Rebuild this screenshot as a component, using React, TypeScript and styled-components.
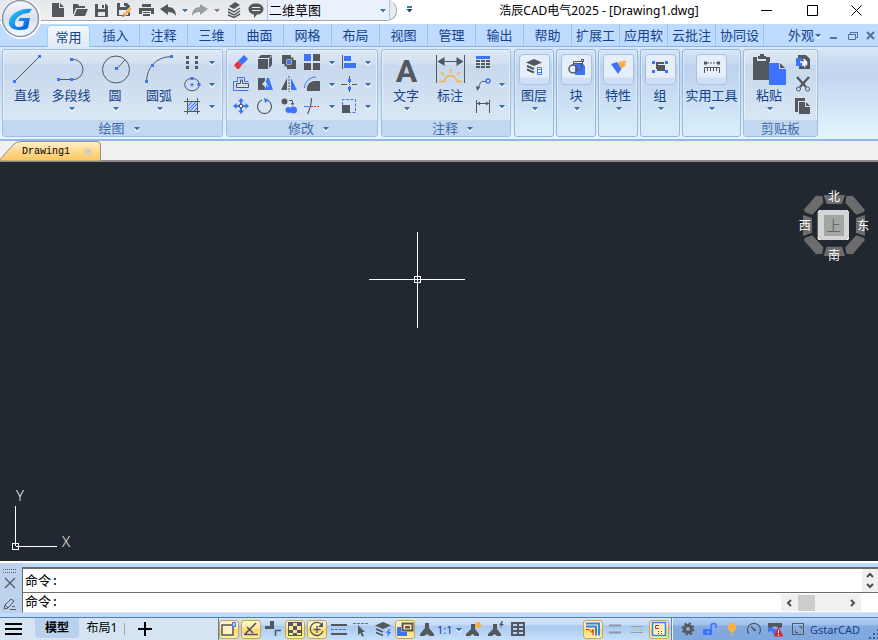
import React from 'react';
import styled, { createGlobalStyle, css } from 'styled-components';

const K = '#53585f';
const B = '#3d73ff';
const O = '#fbb040';
const NAVY = '#15428b';

const GlobalStyle = createGlobalStyle`
  *, *::before, *::after { box-sizing: border-box; }
  body {
    margin: 0;
    font-family: "Noto Sans", "Noto Sans CJK SC", sans-serif;
    font-size: 13px;
    color: #000;
    background: #bfdbff;
  }
  button, select, input, textarea { font: inherit; color: inherit; }
  button { margin: 0; padding: 0; border: 0; background: none; }
  svg { display: block; flex: none; overflow: visible; }
`;

const Page = styled.div`
  position: relative;
  display: flex;
  flex-direction: column;
  min-height: 100vh;
  overflow: hidden;
`;

/* ---------- title bar ---------- */

const TitleBar = styled.header`
  display: flex;
  align-items: flex-start;
  height: 24px;
  background: #fff;
`;

const QuickAccess = styled.div`
  display: flex;
  align-items: center;
  height: 21px;
  padding: 0 6px 0 47px;
  background: linear-gradient(#e4e7ec, #eeeff2);
  border: solid #a4a6ab;
  border-width: 0 1px 1px 0;
  border-radius: 0 10px 10px 0;
`;

const ToolButton = styled.button<{ $w?: number }>`
  display: flex;
  flex: none;
  align-items: center;
  justify-content: center;
  width: ${p => p.$w ?? 22}px;
  height: 20px;
`;

const WorkspaceBox = styled.label`
  display: grid;
  align-items: center;
  width: 123px;
  height: 20px;
  background: #e9f1fc;
  border: solid #a9c5e8;
  border-width: 0 1px;

  > * { grid-area: 1 / 1; }
  > svg { justify-self: end; margin-right: 3px; pointer-events: none; }
`;

const WorkspaceSelect = styled.select`
  width: 100%;
  height: 20px;
  padding: 0 1px;
  border: 0;
  background: none;
  appearance: none;
  line-height: 20px;
`;

const WindowTitle = styled.h1`
  flex: 1;
  margin: 0;
  padding-left: 32px;
  font-size: 12px;
  font-weight: 400;
  line-height: 22px;
  text-align: center;
  white-space: nowrap;
`;

const AppButton = styled.button`
  position: absolute;
  z-index: 2;
  top: 0;
  left: 1px;
  width: 42px;
  height: 40px;
`;

/* ---------- ribbon tabs ---------- */

const TabRow = styled.nav`
  display: flex;
  height: 23px;
  padding-left: 44px;
  background: #bfdbff;
  border-bottom: 1px solid #8db2e3;
  color: ${NAVY};
`;

const RibbonTab = styled.button<{ $active?: boolean }>`
  flex: none;
  width: 48px;
  height: 22px;
  overflow: hidden;
  border-right: 1px solid #a3c3ec;
  line-height: 22px;
  white-space: nowrap;
  ${p => p.$active && css`
    width: 43px;
    height: 22px;
    margin: 1px 2px -1px 3px;
    line-height: 20px;
    background: linear-gradient(#f4f8fd, #dfe9f5);
    border: 1px solid #8fdcf2;
    border-bottom: 0;
    border-radius: 4px 4px 0 0;
  `}
`;

const TabRowEnd = styled.div`
  display: flex;
  flex: 1;
  align-items: center;
  justify-content: flex-end;
`;

const LookButton = styled.button`
  display: flex;
  align-items: center;
  margin-right: 3px;
  line-height: 20px;
`;

/* ---------- ribbon ---------- */

const Ribbon = styled.section`
  display: flex;
  gap: 2px;
  padding: 2px 1px 2px 2px;
  background: linear-gradient(#dbe8f7 0, #c6daf2 16px, #c2d6f0 30px, #e3f6ff 92px);
  border-bottom: 2px solid #93b8e6;
  color: ${NAVY};
`;

const Panel = styled.section<{ $w: number }>`
  display: flex;
  flex: none;
  flex-direction: column;
  width: ${p => p.$w}px;
  height: 88px;
  overflow: hidden;
  background: linear-gradient(#dfe8f4 0, #d3e0f1 14px, #c7d8ed 15px, #d9e6f4 70px);
  border: 1px solid #9ebedd;
  border-radius: 3px;
  box-shadow: inset 0 0 0 1px #e6f0fa;

  & + & { margin-left: 1px; }
`;

const PanelBody = styled.div`
  display: flex;
  flex: 1;
  padding: 2px 2px 0;
`;

const PanelTitle = styled.button<{ $menu?: boolean }>`
  display: flex;
  align-items: center;
  justify-content: center;
  gap: 8px;
  height: 16px;
  padding-left: ${p => (p.$menu ? 13 : 0)}px;
  background: #c1d8f0;
  color: #3f6cab;
  line-height: 16px;
`;

const SoloPanel = styled.button<{ $w: number }>`
  display: flex;
  flex: none;
  flex-direction: column;
  align-items: center;
  width: ${p => p.$w}px;
  height: 88px;
  padding-top: 4px;
  background: linear-gradient(#d8e5f5 0, #c5d8ef 14px, #bdd1ec 15px, #d8effa 86px);
  border: 1px solid #93b6da;
  border-radius: 3px;
  box-shadow: inset 0 0 0 1px #dcebf9;

  ${Panel} + & { margin-left: 1px; }
`;

const IconFrame = styled.span`
  display: flex;
  align-items: center;
  justify-content: center;
  width: 31px;
  height: 31px;
  padding-bottom: 6px;
  background: linear-gradient(#e6eefa 0 22px, #cfe0f4 23px);
  border: 1px solid #a8c3e2;
  border-radius: 4px;
`;

const BigButton = styled.button<{ $w?: number }>`
  display: flex;
  flex: none;
  flex-direction: column;
  align-items: center;
  width: ${p => p.$w ?? 44}px;
  padding-top: 1px;
`;

const Label = styled.span`
  height: 20px;
  margin-bottom: 1px;
  line-height: 20px;
  white-space: nowrap;
`;

const SmallGrid = styled.div<{ $cols: string }>`
  display: grid;
  flex: none;
  grid-template-columns: ${p => p.$cols};
  grid-auto-rows: 22px;
  height: 66px;
`;

const SmallButton = styled.button`
  display: flex;
  align-items: center;
  justify-content: center;
  padding-bottom: 2px;
`;

/* ---------- document tabs and drawing area ---------- */

const DocBar = styled.nav`
  display: flex;
  align-items: flex-end;
  height: 21px;
  background: #f0f0f0;
  border-bottom: 2px solid #8c8c8c;
`;

const DocTab = styled.div`
  display: grid;
  width: 101px;
  height: 20px;
  margin-bottom: -1px;

  > * { grid-area: 1 / 1; }
`;

const DocTabContent = styled.div`
  display: flex;
  align-items: center;
  justify-content: space-between;
  padding: 1px 8px 0 22px;
  font: 10px/18px "Liberation Mono", monospace;
`;

const Canvas = styled.main`
  position: relative;
  flex: 1;
  min-height: 200px;
  background: #212830;
`;

const Crosshair = styled.svg`
  position: absolute;
  top: 70px;
  left: 369px;
`;

const ViewCube = styled.svg`
  position: absolute;
  top: 18px;
  right: 8px;
  font-family: "Noto Sans CJK SC", sans-serif;
`;

const AxisIcon = styled.svg`
  position: absolute;
  bottom: 8px;
  left: 11px;
  font-family: "Open Sans", sans-serif;
  font-weight: 300;
`;

/* ---------- command window ---------- */

const CommandArea = styled.section`
  display: flex;
  height: 56px;
  background: #fff;
  border-top: 2px solid #fff;
  border-bottom: 4px solid #bfdbff;
`;

const Gutter = styled.div`
  display: flex;
  flex: none;
  flex-direction: column;
  align-items: center;
  justify-content: space-between;
  width: 22px;
  padding: 6px 3px 0 0;
  background: #bcd1eb;
`;

const CommandBody = styled.div`
  flex: 1;
  min-width: 0;
  border-top: 4px solid #bfdbff;
  font-family: "Liberation Mono", "Noto Sans CJK SC", monospace;
  font-size: 13px;
`;

const History = styled.div`
  display: flex;
  height: 26px;
  border: solid #6d6d6d;
  border-width: 2px 0 1px 1px;
`;

const HistoryText = styled.div`
  display: flex;
  flex: 1;
  flex-direction: column;
  justify-content: flex-end;
  overflow: hidden;
  padding-left: 2px;
  line-height: 20px;
`;

const Prompt = styled.div`
  display: flex;
  height: 20px;
  padding: 0 17px 0 2px;
  border-left: 1px solid #6d6d6d;
  border-bottom: 1px solid #e3e3e3;
`;

const PromptInput = styled.input`
  flex: 1;
  min-width: 0;
  padding: 0;
  border: 0;
  outline: 0;
  line-height: 18px;
`;

const VScroll = styled.div`
  display: flex;
  flex-direction: column;
  align-items: center;
  justify-content: space-around;
  width: 16px;
  background: #f0f0f0;
`;

const HScroll = styled.div`
  display: flex;
  align-items: center;
  width: 80px;
  height: 17px;
  margin-top: 1px;
  padding: 0 4px;
  background: #f0f0f0;
`;

const Thumb = styled.span`
  width: 17px;
  height: 16px;
  margin: 0 auto 0 5px;
  background: #cdcdcd;
`;

/* ---------- status bar ---------- */

const StatusBar = styled.footer`
  display: flex;
  height: 23px;
  border-top: 1px solid #567db1;
`;

const Layouts = styled.div`
  display: flex;
  flex: none;
  align-items: center;
  width: 219px;
  background: #d5e3f2;
  border-right: 1px solid #68809f;
  font-size: 12px;
`;

const MenuButton = styled.button`
  display: flex;
  justify-content: center;
  width: 27px;
  margin-right: 8px;
`;

const LayoutTab = styled.button<{ $active?: boolean }>`
  width: 44px;
  height: 20px;
  align-self: flex-start;
  line-height: 18px;
  border-radius: 0 0 4px 4px;
  ${p => p.$active && css`
    background: #b9d1ed;
    font-weight: 700;

    & + & { margin-left: 1px; }
  `}
`;

const Rule = styled.span`
  width: 1px;
  height: 12px;
  margin: 0 13px 0 0;
  background: #9aa7b6;
`;

const StatusTools = styled.div`
  display: flex;
  flex: 1;
  align-items: center;
  background: linear-gradient(#d6e6fa 0, #c4daf6 7px, #a9c9f0 8px, #c6e0fb 22px);
`;

const StatusToggle = styled.button<{ $on?: boolean }>`
  display: flex;
  flex: none;
  align-items: center;
  justify-content: center;
  width: 20px;
  height: 19px;
  margin-right: 2px;
  ${p => p.$on && css`
    background: linear-gradient(#fff6d8, #ffe79c 45%, #ffd85e 50%, #fff0b0);
    border: 1px solid #c5a559;
    border-radius: 3px;
  `}
`;

const ScaleButton = styled.button`
  display: flex;
  align-items: center;
  gap: 2px;
  margin: 0 2px 0 -2px;
  color: ${NAVY};
  font-size: 11px;
`;

const Spacer = styled.span`
  flex: 1;
`;

const StatusInfo = styled.div`
  display: flex;
  align-items: center;
  padding-left: 6px;
  background: linear-gradient(#b4d0f3 0, #9dbfec 7px, #86abe0 8px, #7fa8de 22px);
  border-left: 1px solid #5f84b8;
  box-shadow: inset 1px 0 0 #e3effc;
  color: ${NAVY};
  font-size: 11px;
`;

const Grip = styled.span`
  align-self: flex-end;
  margin-left: 8px;
`;

/* ---------- drawings ---------- */

const Caret = ({ c = '#3f70ae' }: { c?: string }) => (
  <svg width="7" height="5" viewBox="0 0 7 5" aria-hidden="true">
    <path d="M1 3h6L4 6z" fill="#fff" />
    <path d="M1 1h6L4 4.500z" fill={c} />
  </svg>
);

const dot = (x: number, y: number, s = 3) => (
  <rect key={`${x}-${y}`} x={x - s / 2} y={y - s / 2} width={s} height={s} fill={B} />
);

const big: Record<string, React.ReactNode> = {
  line: <><path d="M4.5 28.5l25-25" stroke={K} />{dot(4.5, 28.5)}{dot(29.5, 3.5)}</>,
  polyline: <><path d="M4.5 26.5h13a10 10 0 0 0 11.500-10a10 10 0 0 0-11.500-10" stroke={K} fill="none" />{dot(4.5, 26.5)}{dot(17.5, 26.5)}{dot(17.5, 6.5)}</>,
  circle: <><circle cx="18" cy="16.500" r="13.500" stroke={K} fill="none" /><path d="M18.500 16l8.500-9" stroke={K} />{dot(18.5, 15.5)}</>,
  arc: <><path d="M4.500 28.500C5 14 14 4 29.500 3.500" stroke={K} fill="none" />{dot(4.5, 28.5)}{dot(10.5, 12.5)}{dot(29.5, 3.5)}</>,
  text: <text x="17.500" y="29" textAnchor="middle" fontFamily="Roboto, sans-serif" fontWeight="700" fontSize="32" fill={K}>A</text>,
  dim: (
    <>
      <path d="M3.500 2v28M31.500 2v28M5 8.500h25" stroke={K} />
      <path d="M4.500 8.500l7-4.500v9zM30.500 8.500l-7-4.500v9z" fill={K} />
      <path d="M6 28.500h5.500M23.500 28.500H29M11.500 28.500a6 6 0 0 1 12 0M17.500 20v-4M11 22l-3-3M24 22l3-3" stroke={O} strokeWidth="1.500" fill="none" />
    </>
  ),
  paste: (
    <>
      <path d="M1 4h4v4h9V4h4v5h-1v18H1z" fill={K} />
      <path d="M6 3h2V1h4v2h2v3H6z" fill={K} />
      <path d="M17 10h10v6h7v16H17z" fill={B} /><path d="M28 10l5 5h-5z" fill={K} />
    </>
  ),
};

const BigIcon = ({ n }: { n: string }) => (
  <svg width="34" height="32" viewBox="0 0 34 32" aria-hidden="true">{big[n]}</svg>
);

const icons: Record<string, React.ReactNode> = {
  file: <><path d="M2 1h7v5h5v9H2z" fill={K} /><path d="M10 1l4 4h-4z" fill={K} /></>,
  open: <><path d="M1 13V2h5l1 2h6v2H4z" fill={K} /><path d="M5 7h11l-3 7H2z" fill={K} /></>,
  save: <><path d="M1 2h11l2 2v11H1z" fill={K} /><path d="M4 2h7v5H4zM4 10h7v4H4z" fill="#e8ebef" /><path d="M8 3h2v3H8z" fill={K} /></>,
  saveas: (
    <>
      <path d="M1 1h10l3 3v10H1z" fill={K} /><path d="M4 1h6v4H4zM3 8h9v5H3z" fill="#e8ebef" /><path d="M8 1h2v3H8z" fill={K} />
      <path d="M6 15l1-3 7-7 2 2-7 7z" fill={O} stroke="#e8ebef" strokeWidth=".6" /><path d="M6 15l1-3 2 2z" fill="#e8423f" />
    </>
  ),
  print: <><path d="M4 2h9v3H4zM1 6h15v6h-3V9H4v3H1z" fill={K} /><path d="M5 10h7v4H5z" fill={K} /><path d="M5 11.500h7" stroke="#e8ebef" /></>,
  undo: <path d="M0 7l8-5v3c5 0 8 3 8 9-2-3-4-4-8-4v3z" fill={K} />,
  redo: <path d="M16 7L8 2v3C3 5 0 8 0 14c2-3 4-4 8-4v3z" fill="#9a9ea4" />,
  layers: <><path d="M9 0l5 3-6 4-5-2.500z" fill={K} /><path d="M2 7l6 3 6-4M2 10l6 3 6-4M2 13l6 2.500 6-3.500" stroke={K} strokeWidth="1.500" fill="none" /></>,
  chat: <><path d="M8 1.500c4 0 7.500 2 7.500 5.500S12 12.500 9 12.500L6 16v-3.500C3 12 .5 10 .5 7 .5 3.500 4 1.500 8 1.500z" fill={K} /><path d="M4 5.500h8M4 8.500h8" stroke="#e8ebef" /></>,

  points: <path d="M2 2h3v3H2zM11 2h3v3h-3zM2 7h3v3H2zM11 7h3v3h-3zM2 12h3v3H2zM11 12h3v3h-3z" fill={K} />,
  ellipse: <><ellipse cx="8" cy="8.500" rx="7.300" ry="6.300" stroke={K} fill="none" /><path d="M8 7v4M6 8.500h4" stroke={B} />{dot(8, 2.500)}{dot(15, 8.500)}</>,
  hatch: <><path d="M4 4h9v9H4z" fill="#b7cbff" /><path d="M4 8l4-4M4 12l8-8M6 13l7-7M10 13l3-3" stroke={B} /><path d="M3.500 0v16M13.500 0v16M0 3.500h16M0 13.500h16" stroke={K} /></>,

  erase: <><path d="M5 7l6-6 4 4-6 6z" fill={B} /><path d="M1 11l4-4 4 4-3 4H4z" fill="#e03a3e" /></>,
  box: <><path d="M1 5h10v10H1zM1 4l3-3h11l-3 3zM12 5l3-3v9l-3 3z" fill={K} /></>,
  overlap: <><path d="M1 1h9v3H4v6H1zM15 15H6v-3h6V6h3z" fill={K} /><path d="M4.500 4.500h7v7h-7z" fill="#fff" stroke={K} strokeWidth="2" /><path d="M6 6h4v4H6z" fill={B} /></>,
  array: <><path d="M0 0h7v7H0z" fill={B} /><path d="M9 0h7v7H9zM0 9h7v7H0zM9 9h7v7H9z" fill={K} /></>,
  align: <><path d="M1.500 1v14" stroke={K} /><path d="M3 2h7v5H3zM3 9h12v5H3z" fill={B} /></>,
  offset: <><path d="M4.500 5.500v-4h7v4h4M4.500 5.500h-4v9h15" stroke={B} fill="none" /><path d="M7.500 4v3.500h-4V11.500h12V7.500h-6V4z" stroke={K} fill="none" /></>,
  stretch: <><path d="M1 2h7v3l-3 3 3 3v3H1z" fill={K} /><path d="M10 2h2l4 12H7l2-3V5z" fill={B} /><path d="M8 5l3 6" stroke="#dbe6f4" /></>,
  mirror: <><path d="M6 2v12H0z" fill={K} /><path d="M10 2v12h6z" fill={B} /><path d="M8 0v16" stroke={K} strokeDasharray="2 1" /></>,
  fillet: <><path d="M3 15v-3c1-5 4-7 8-7h5v10z" fill={K} /><path d="M.5 12C1 5 6 1 12 1" stroke={B} fill="none" /></>,
  breakpt: <><path d="M8.500 0v16M0 8.500h6M11 8.500h5" stroke={K} />{dot(8.5, 4.5)}{dot(8.5, 12.5)}<path d="M7 7h3v3H7z" fill="#d2e0f2" /><path d="M8 8h1v1H8z" fill={K} /></>,
  move: <><path d="M8 2v12M2 8h12" stroke={B} strokeWidth="2" /><path d="M8 0l3 3.500H5zM8 16l3-3.500H5zM0 8l3.500-3v6zM16 8l-3.500-3v6z" fill={B} /><path d="M6.500 6.500h3v3h-3z" fill="#fff" stroke={K} /></>,
  rotate: <><path d="M10 2a7 7 0 1 1-5 0" stroke={K} strokeWidth="1.200" fill="none" /><path d="M7 0l5 2-4 3z" fill={B} /></>,
  copy: <><circle cx="3.500" cy="3.500" r="3" fill={K} /><circle cx="7.500" cy="12" r="3" fill={B} /><circle cx="12.500" cy="12" r="3.500" fill={B} /><path d="M8 2.500h3.500V6" stroke={K} fill="none" /><path d="M9.500 5h4l-2 2.500z" fill={K} /></>,
  trim: <><path d="M0 8.500h5" stroke={B} /><path d="M7 8.500h9" stroke="#e03a3e" strokeDasharray="2 1" /><path d="M7.500 0c0 5-1 10-4 16" stroke={K} strokeWidth="1.200" fill="none" /></>,
  scale: <><path d="M1.500 7V1.500h13v13H9" stroke={B} strokeDasharray="3 1.500" fill="none" /><path d="M1 7h8v8H1z" fill={K} /></>,

  table: <><path d="M1 2h14v3H1z" fill={B} /><path d="M1 6h4v2H1zM6 6h4v2H6zM11 6h4v2h-4zM1 9h4v2H1zM6 9h4v2H6zM11 9h4v2h-4zM1 12h4v2H1zM6 12h4v2H6zM11 12h4v2h-4z" fill={K} /></>,
  leader: <><path d="M3.500 13c1-5 2-7.500 4-7.500h3" stroke={K} fill="none" /><path d="M1 10l4 1-3 4z" fill={K} /><circle cx="13" cy="5" r="2" fill="#d5e2f4" stroke={B} strokeWidth="1.500" /></>,
  linear: <><path d="M1.500 2v13M14.500 2v13M2 5.500h12" stroke={K} /><path d="M2 5.500l3-2v4zM14 5.500l-3-2v4z" fill={K} /></>,

  layerlist: <><path d="M8 0l8 3.500L8 7 0 3.500z" fill={K} /><path d="M1 7l7 3M1 10.500l7 3" stroke={K} strokeWidth="2" fill="none" /><path d="M11.500 8.500h4v7h-4z" fill="#fff" stroke={B} /><path d="M12 10.500h3M12 13.500h3" stroke={B} /></>,
  block: <><path d="M7 4h7l3 3v9H7z" fill={B} /><path d="M5.500 6V2.500H14M14.500 2v6" stroke={K} fill="none" /><rect x="13.500" y=".5" width="2" height="2" fill="#fff" stroke={K} /><path d="M5 4.500h8.500V11H9" fill="none" stroke={K} /><circle cx="5" cy="10" r="4" fill="none" stroke={K} strokeWidth="1.500" /></>,
  brush: <><path d="M1 5l6-2 5 6-4 6z" fill={B} /><path d="M8 4l2-2 2 1 2-2 2 2-1 2 1 1-5 4z" fill={O} /></>,
  group: <><path d="M4 3h8v2H6v5H4z" fill={K} /><path d="M0 2h3v3H0zM13 2h3v3h-3zM0 11h3v3H0zM13 11h3v3h-3z" fill={B} /><path d="M5 6h8v6H5z" fill={K} /></>,
  ruler: <><path d="M0 4h3M13 4h3" stroke={K} strokeWidth="3" /><path d="M3 4h10" stroke={K} strokeDasharray="2 1" /><path d="M.5 14V8.500h15V14M3.500 8v4M6.500 8v4M9.500 8v4M12.500 8v4" stroke={K} fill="none" /></>,

  pastespec: <><path d="M3 1h8l4 4v10H4v-3h5v2l4-4-4-4v2H3z" fill={K} /><path d="M1 4h6v8H1z" fill={B} /><path d="M5 8h6M8.500 5l3 3-3 3" stroke="#fff" strokeWidth="1.500" fill="none" /></>,
  cut: <><path d="M2 1l9 10M14 1L5 11" stroke={K} strokeWidth="2.400" /><circle cx="3.500" cy="13" r="2" fill="none" stroke={K} /><circle cx="12.500" cy="13" r="2" fill="none" stroke={K} /></>,
  copyclip: <><path d="M0 0h10v3H3v11H0z" fill={K} /><path d="M4 4h6v5h5v7H4z" fill={K} /><path d="M11 4l4 4h-4z" fill={K} /></>,

  snap: <><path d="M1 4h11v10H1z" fill="#fff3c6" stroke={K} strokeWidth="1.500" /><path d="M11.500 1.500h3v4h-3z" fill="#bcd0ff" stroke={B} /></>,
  angle: <path d="M2 13L13 2M1 13.500h14M4 6l6 6" stroke={K} strokeWidth="1.700" fill="none" />,
  ortho: <><path d="M5 0h4v8H0V5h5z" fill={K} /><path d="M10.500 15V9.500H16" stroke={K} strokeWidth="1.500" fill="none" /></>,
  grid: <><path d="M1 1h14v14H1z" fill={K} /><path d="M2 5h4v4H2zM6 2h4v3H6zM10 5h4v4h-4zM6 9h4v3H6zM2 12h4v2H2zM10 12h4v2h-4z" fill="#ffe79c" /></>,
  polar: <><path d="M13 4a6.500 6.500 0 1 0 1 6M8 5v7M4.500 8.500h7" stroke={K} strokeWidth="1.300" fill="none" /><path d="M14 1v5H9z" fill={K} /></>,
  lwt: <><path d="M0 4h16" stroke={K} strokeWidth="2" /><path d="M0 8.500h16" stroke={B} strokeDasharray="3 1" /><path d="M0 13h16" stroke={K} strokeWidth="2" /></>,
  pick: <><path d="M0 2.500h16" stroke={B} strokeDasharray="3 1" /><path d="M5 4l7 7H9l2 4-2 .5L7.500 12 5 14z" fill={K} /></>,
  layerflash: <><path d="M8 1l8 3.500L8 8 0 4.500z" fill={K} /><path d="M1 8l7 3M1 11.500l7 3" stroke={K} strokeWidth="1.800" fill="none" /><path d="M14 8l-3 4h2l-1 4 4-5h-2l1-3z" fill={B} /></>,
  screens: <><path d="M5.500 2.500h10v7h-10z" fill="#ffe79c" stroke={K} strokeWidth="2" /><path d="M8 5h5v2.500H8z" fill={K} /><path d="M0 6h4v5h6v4H0z" fill={B} /></>,
  person: <path d="M6 2h4v5l5 6v2h-4l-3-2-3 2H1v-2l5-6z" fill={K} />,
  personsun: <><path d="M5 3h4v5l4 5v2h-4l-2.500-2L4 15H0v-2l5-5z" fill={K} /><circle cx="12" cy="4" r="3" fill={O} /></>,
  personbolt: <><path d="M5 3h4v5l4 5v2h-4l-2.500-2L4 15H0v-2l5-5z" fill={K} /><path d="M14 0l-3 4h2l-1 3 4-4h-2l1-3z" fill={K} /></>,
  cells: <><path d="M1 1h14v14H1z" fill={K} /><path d="M3 3h4v2H3zM9 3h4v2H9zM3 7h4v2H3zM9 7h4v2H9zM3 11h4v2H3zM9 11h4v2H9z" fill="#b9d4f5" /></>,

  cascade: <><path d="M1 2.500h13v12M1 5.500h10v9" stroke="#2f86f0" strokeWidth="2" fill="none" /><path d="M1 8.500h3l3 3 1-3v6" stroke="#e32020" fill="none" /></>,
  bars: <path d="M2 4.500h12M2 11.500h12" stroke="#8e98a6" strokeWidth="2" />,
  hatchbar: <><path d="M2 5.500h12M2 11.500h12" stroke="#93a0a8" /><path d="M3 10l4-4M7 10l4-4M11 10l3-3" stroke="#b9bd8a" /></>,
  schema: <><path d="M1.500 1.500h13v13h-13z" stroke="#2f86f0" strokeWidth="1.600" fill="#fff1bd" /><path d="M8 4.500H4.500v3H8" stroke="#e32020" fill="none" /><path d="M7 10.500h6M7 12.500h6" stroke="#e32020" fill="none" strokeDasharray="1 2" /></>,
  gear: <><circle cx="8" cy="8" r="3.500" fill="none" stroke={K} strokeWidth="3" /><circle cx="8" cy="8" r="5.500" fill="none" stroke={K} strokeWidth="2" strokeDasharray="2.300 2" /></>,
  unlock: <><path d="M1 8h9v6H1z" fill={B} /><path d="M9 8V5a2.500 2.500 0 0 1 5 0v2" stroke={B} strokeWidth="1.600" fill="none" /><path d="M5 10h1.500v2H5z" fill="#9fc0ee" /></>,
  bulb: <><path d="M8 2a4.300 4.300 0 0 1 2 8v1H6v-1a4.300 4.300 0 0 1 2-8z" fill={O} /><path d="M6 12.500h4M7 14.500h2" stroke={O} /></>,
  gauge: <><path d="M3 13a6.500 6.500 0 1 1 10 0M8.500 9L5 5.500" stroke={K} strokeWidth="1.300" fill="none" /><circle cx="8.500" cy="9" r="1.300" fill={K} /></>,
  alert: <><path d="M0 2h14v4c-4 3-6-3-9 0l-5 2z" fill={K} /><path d="M0 7c4-3 6 3 9 1v6H6L4 10l-4 1z" fill={B} /><path d="M10.500 6l5 9.500h-10z" fill="#e6252b" /><path d="M10.500 9v3M10.500 13v1.500" stroke="#fff" /></>,
  expand: <><path d="M2.500 2.500h11v11h-11z" fill="none" stroke={K} /><path d="M9 5.500h2.500V8M5.500 9v2.500H8" fill="none" stroke={K} /></>,
};

const Icon = ({ n, s = 16 }: { n: string; s?: number }) => (
  <svg width={s} height={s} viewBox="0 0 16 16" aria-hidden="true">{icons[n]}</svg>
);

const Chevron = ({ d }: { d: string }) => (
  <svg width="8" height="8" viewBox="0 0 8 8" aria-hidden="true">
    <path d={d} stroke="#505050" strokeWidth="2" fill="none" />
  </svg>
);

/* ---------- composed controls ---------- */

const Big = ({ n, label, w, menu = true }: { n: string; label: string; w?: number; menu?: boolean }) => (
  <BigButton $w={w}>
    <BigIcon n={n} />
    <Label>{label}</Label>
    {menu && <Caret />}
  </BigButton>
);

const Smalls = ({ cols, items }: { cols: string; items: [string, string][] }) => (
  <SmallGrid $cols={cols}>
    {items.map(([n, label], i) => (
      n === '' ? <span key={i} /> : (
        <SmallButton key={i} aria-label={label}>
          {n === 'caret' ? <Caret /> : <Icon n={n} />}
        </SmallButton>
      )
    ))}
  </SmallGrid>
);

const Solo = ({ n, label, w = 40 }: { n: string; label: string; w?: number }) => (
  <SoloPanel $w={w}>
    <IconFrame><Icon n={n} /></IconFrame>
    <Label>{label}</Label>
    <Caret />
  </SoloPanel>
);

const tabs = ['常用', '插入', '注释', '三维', '曲面', '网格', '布局', '视图', '管理', '输出', '帮助', '扩展工', '应用软', '云批注', '协同设'];

const quick: [string, string][] = [
  ['file', '新建'], ['open', '打开'], ['save', '保存'], ['saveas', '另存为'], ['print', '打印'], ['undo', '放弃'],
];

const drawTools: [string, string][] = [
  ['points', '多点'], ['caret', '点选项'],
  ['ellipse', '椭圆'], ['caret', '椭圆选项'],
  ['hatch', '填充'], ['caret', '填充选项'],
];

const modifyTools: [string, string][] = [
  ['erase', '删除'], ['box', '拉伸体'], ['overlap', '叠放'], ['array', '阵列'], ['caret', '阵列选项'], ['align', '对齐'], ['caret', '对齐选项'],
  ['offset', '偏移'], ['stretch', '拉伸'], ['mirror', '镜像'], ['fillet', '圆角'], ['caret', '圆角选项'], ['breakpt', '打断'], ['caret', '打断选项'],
  ['move', '移动'], ['rotate', '旋转'], ['copy', '复制'], ['trim', '修剪'], ['caret', '修剪选项'], ['scale', '缩放'], ['caret', '缩放选项'],
];

const noteTools: [string, string][] = [
  ['table', '表格'], ['', ''],
  ['leader', '引线'], ['caret', '引线选项'],
  ['linear', '线性'], ['caret', '线性选项'],
];

const toggles: [string, string, boolean][] = [
  ['snap', '捕捉', true], ['angle', '极轴', true], ['ortho', '正交', false], ['grid', '栅格', true], ['polar', '追踪', true],
  ['lwt', '线宽', false], ['pick', '选择', false], ['layerflash', '图层', false], ['screens', '视口', true], ['person', '注释比例', false],
];

const modes: [string, string, boolean][] = [
  ['cascade', '导线', true], ['bars', '平行线', false], ['hatchbar', '线束', false], ['schema', '原理图', true],
];

const infos: [string, string][] = [
  ['gear', '设置'], ['unlock', '锁定'], ['bulb', '隔离'], ['gauge', '性能'], ['alert', '警告'], ['expand', '全屏'],
];

export default function App() {
  return (
    <>
      <GlobalStyle />
      <Page>
        <AppButton aria-label="应用程序菜单">
          <svg width="42" height="40" viewBox="0 0 42 40">
            <defs>
              <linearGradient id="orb" x1="0" y1="0" x2="0" y2="1">
                <stop offset="0" stopColor="#f7f9fb" /><stop offset=".5" stopColor="#d9e0ea" /><stop offset="1" stopColor="#f5fbff" />
              </linearGradient>
              <linearGradient id="mark" x1="0" y1="0" x2="1" y2="1">
                <stop offset="0" stopColor="#35d2f5" /><stop offset=".5" stopColor="#1b8cf4" /><stop offset="1" stopColor="#0a50c8" />
              </linearGradient>
            </defs>
            <circle cx="20" cy="19" r="20" fill="#fff" />
            <circle cx="19.500" cy="18.500" r="18" fill="url(#orb)" stroke="#8b95a5" strokeWidth="1.500" />
            <path d="M31 9C20 8 10 13 8 21c-1 7 5 9 11 9 4 0 7-1 8-2l2-10H19l-2 3h6l-1 5c-5 2-9 1-8-4 1-5 7-9 14-9z" fill="url(#mark)" />
          </svg>
        </AppButton>

        <TitleBar>
          <QuickAccess>
            {quick.map(([n, label]) => <ToolButton key={n} aria-label={label}><Icon n={n} /></ToolButton>)}
            <ToolButton $w={10} aria-label="放弃列表"><Caret /></ToolButton>
            <ToolButton aria-label="重做"><Icon n="redo" /></ToolButton>
            <ToolButton $w={11} aria-label="重做列表"><Caret c="#7d8188" /></ToolButton>
            <ToolButton $w={23} aria-label="图层"><Icon n="layers" /></ToolButton>
            <ToolButton aria-label="反馈"><Icon n="chat" /></ToolButton>
            <WorkspaceBox>
              <WorkspaceSelect aria-label="工作空间" defaultValue="2d">
                <option value="2d">二维草图</option>
              </WorkspaceSelect>
              <Caret />
            </WorkspaceBox>
          </QuickAccess>
          <ToolButton $w={25} aria-label="自定义快速访问">
            <svg width="7" height="8" viewBox="0 0 7 8"><path d="M1 1h5" stroke={NAVY} strokeWidth="1.500" /><path d="M.5 3h6l-3 3.500z" fill={NAVY} /></svg>
          </ToolButton>
          <WindowTitle>浩辰CAD电气2025 - [Drawing1.dwg]</WindowTitle>
          <ToolButton $w={45} aria-label="最小化"><svg width="11" height="11"><path d="M0 5.500h11" stroke="#000" /></svg></ToolButton>
          <ToolButton $w={46} aria-label="最大化"><svg width="11" height="11"><path d="M.5.5h10v10H.5z" stroke="#000" fill="none" /></svg></ToolButton>
          <ToolButton $w={43} aria-label="关闭"><svg width="11" height="11"><path d="M.5.5l10 10M10.500.5l-10 10" stroke="#000" /></svg></ToolButton>
        </TitleBar>

        <TabRow>
          {tabs.map((t, i) => <RibbonTab key={t} $active={i === 0}>{t}</RibbonTab>)}
          <TabRowEnd>
            <LookButton>外观<Caret /></LookButton>
            <ToolButton $w={19} aria-label="最小化图纸"><svg width="9" height="9"><path d="M1 7h7" stroke="#56729c" strokeWidth="2" /></svg></ToolButton>
            <ToolButton $w={19} aria-label="还原图纸"><svg width="10" height="9"><path d="M2.500 3V1.500h7v5H8M.5 3.500h7v5h-7z" stroke="#56729c" fill="none" /><path d="M2 1.500h8M0 3.500h8" stroke="#56729c" /></svg></ToolButton>
            <ToolButton $w={16} aria-label="关闭图纸"><svg width="9" height="9"><path d="M1 1l7 7M8 1L1 8" stroke="#56729c" strokeWidth="2" /></svg></ToolButton>
          </TabRowEnd>
        </TabRow>

        <Ribbon>
          <Panel $w={221}>
            <PanelBody>
              <Big n="line" label="直线" menu={false} />
              <Big n="polyline" label="多段线" />
              <Big n="circle" label="圆" />
              <Big n="arc" label="圆弧" />
              <Smalls cols="22px 17px" items={drawTools} />
            </PanelBody>
            <PanelTitle $menu>绘图 <Caret /></PanelTitle>
          </Panel>
          <Panel $w={152}>
            <PanelBody>
              <Smalls cols="24px 24px 24px 22px 16px 20px 16px" items={modifyTools} />
            </PanelBody>
            <PanelTitle $menu>修改 <Caret /></PanelTitle>
          </Panel>
          <Panel $w={130}>
            <PanelBody>
              <Big n="text" label="文字" />
              <Big n="dim" label="标注" menu={false} />
              <Smalls cols="22px 14px" items={noteTools} />
            </PanelBody>
            <PanelTitle $menu>注释 <Caret /></PanelTitle>
          </Panel>
          <Solo n="layerlist" label="图层" />
          <Solo n="block" label="块" />
          <Solo n="brush" label="特性" />
          <Solo n="group" label="组" />
          <Solo n="ruler" label="实用工具" w={59} />
          <Panel $w={75}>
            <PanelBody>
              <Big n="paste" label="粘贴" w={46} />
              <Smalls cols="22px" items={[['pastespec', '选择性粘贴'], ['cut', '剪切'], ['copyclip', '复制']]} />
            </PanelBody>
            <PanelTitle>剪贴板</PanelTitle>
          </Panel>
        </Ribbon>

        <DocBar>
          <DocTab>
            <svg width="101" height="20" viewBox="0 0 101 20">
              <defs>
                <linearGradient id="doc" x1="0" y1="0" x2="0" y2="1">
                  <stop offset="0" stopColor="#fff0d2" /><stop offset=".45" stopColor="#ffdb94" /><stop offset="1" stopColor="#ffc65c" />
                </linearGradient>
              </defs>
              <path d="M0 18.500L13 4Q16 .5 21 .5H97q3.500 0 3.500 3.500v16H0z" fill="url(#doc)" stroke="#8f8f8f" />
            </svg>
            <DocTabContent>
              Drawing1
              <ToolButton $w={10} aria-label="关闭 Drawing1"><svg width="8" height="8"><path d="M1 1l6 6M7 1L1 7" stroke="#c9c9c9" strokeWidth="2" /></svg></ToolButton>
            </DocTabContent>
          </DocTab>
        </DocBar>

        <Canvas>
          <Crosshair width="96" height="96" viewBox="0 0 96 96" aria-hidden="true">
            <path d="M48.500 0v96M0 47.500h96M45.500 44.500h6v6h-6z" stroke="#fff" fill="none" shapeRendering="crispEdges" />
          </Crosshair>

          <ViewCube width="72" height="90" viewBox="54 0 216 270" fontSize="36" fill="#fff" textAnchor="middle">
            <g fill="#6c6c6c">
              <path d="M131 45h64l-9 27h-46zM131 228h64l-9-28h-46zM69 105l27 9v45l-27 9zM255 105l-27 9v45l27 9z" />
              <path d="M108 47l19 2 3 19-33 36-21-7-5-7zM218 47l-19 2-3 19 33 36 21-7 5-7z" />
              <path d="M108 223l19-2 3-19-33-36-21 7-5 7zM218 223l-19-2-3-19 33-36 21 7 5 7z" />
            </g>
            <path d="M124 90h72l11 12v66l-11 12h-72l-11-12v-66z" fill="#d4d5d4" />
            <path d="M124 90l-11 12v-6l5-6zM196 90l11 12v-6l-5-6zM113 168l11 12h-8l-3-4zM207 168l-11 12h8l3-4z" fill="#fff" />
            <path d="M132 105h60v63h-60z" fill="#a3a7a3" />
            <text x="161" y="153" fontSize="42" fill="#656a68">上</text>
            <text x="162" y="63">北</text>
            <text x="162" y="240">南</text>
            <text x="74" y="150">西</text>
            <text x="250" y="150">东</text>
          </ViewCube>

          <AxisIcon width="64" height="64" viewBox="0 0 64 64" fontSize="15" fill="#fff" textAnchor="middle">
            <path d="M4.500 17v40M4.500 57.500h41M1.500 54.500h6v6h-6z" stroke="#fff" fill="none" shapeRendering="crispEdges" />
            <text x="9" y="12">Y</text>
            <text x="55" y="58">X</text>
          </AxisIcon>
        </Canvas>

        <CommandArea>
          <Gutter>
            <svg width="13" height="4"><path d="M0 .5h13M0 3.500h13" stroke="#56606c" strokeDasharray="1 1" /></svg>
            <ToolButton $w={18} aria-label="关闭命令行"><svg width="12" height="12"><path d="M1 1l10 10M11 1L1 11" stroke={K} strokeWidth="1.300" /></svg></ToolButton>
            <ToolButton $w={18} aria-label="命令行设置"><svg width="13" height="13"><path d="M1 12l1-4 6-6 3 2-6 7zM2 8l3 3M7 12.500h6M9 9.500h3" stroke={K} fill="none" /></svg></ToolButton>
          </Gutter>
          <CommandBody>
            <History>
              <HistoryText><div>命令:</div></HistoryText>
              <VScroll>
                <Chevron d="M1 6l3-3 3 3" />
                <Chevron d="M1 2l3 3 3-3" />
              </VScroll>
            </History>
            <Prompt>
              <PromptInput aria-label="命令行" defaultValue="命令:" />
              <HScroll>
                <Chevron d="M6 1L3 4l3 3" />
                <Thumb />
                <Chevron d="M2 1l3 3-3 3" />
              </HScroll>
            </Prompt>
          </CommandBody>
        </CommandArea>

        <StatusBar>
          <Layouts>
            <MenuButton aria-label="布局菜单"><svg width="17" height="12"><path d="M0 1h17M0 6h17M0 11h17" stroke="#000" strokeWidth="2" /></svg></MenuButton>
            <LayoutTab $active>模型</LayoutTab>
            <LayoutTab>布局1</LayoutTab>
            <Rule />
            <button aria-label="新建布局"><svg width="14" height="14"><path d="M7 0v14M0 7h14" stroke="#000" strokeWidth="2" /></svg></button>
          </Layouts>
          <StatusTools>
            {toggles.map(([n, label, on]) => <StatusToggle key={n} $on={on} aria-label={label} aria-pressed={on}><Icon n={n} /></StatusToggle>)}
            <ScaleButton>1:1<Caret /></ScaleButton>
            <StatusToggle aria-label="注释可见性"><Icon n="personsun" /></StatusToggle>
            <StatusToggle aria-label="自动添加比例"><Icon n="personbolt" /></StatusToggle>
            <StatusToggle aria-label="快捷特性"><Icon n="cells" /></StatusToggle>
            <Spacer />
            {modes.map(([n, label, on]) => <StatusToggle key={n} $on={on} aria-label={label} aria-pressed={on}><Icon n={n} /></StatusToggle>)}
          </StatusTools>
          <StatusInfo>
            {infos.map(([n, label]) => <StatusToggle key={n} aria-label={label}><Icon n={n} /></StatusToggle>)}
            <span>GstarCAD</span>
            <Grip><svg width="10" height="12"><path d="M9 1h2v2H9zM5 5h2v2H5zM9 5h2v2H9zM1 9h2v2H1zM5 9h2v2H5zM9 9h2v2H9z" fill="#3c5f92" /></svg></Grip>
          </StatusInfo>
        </StatusBar>
      </Page>
    </>
  );
}
